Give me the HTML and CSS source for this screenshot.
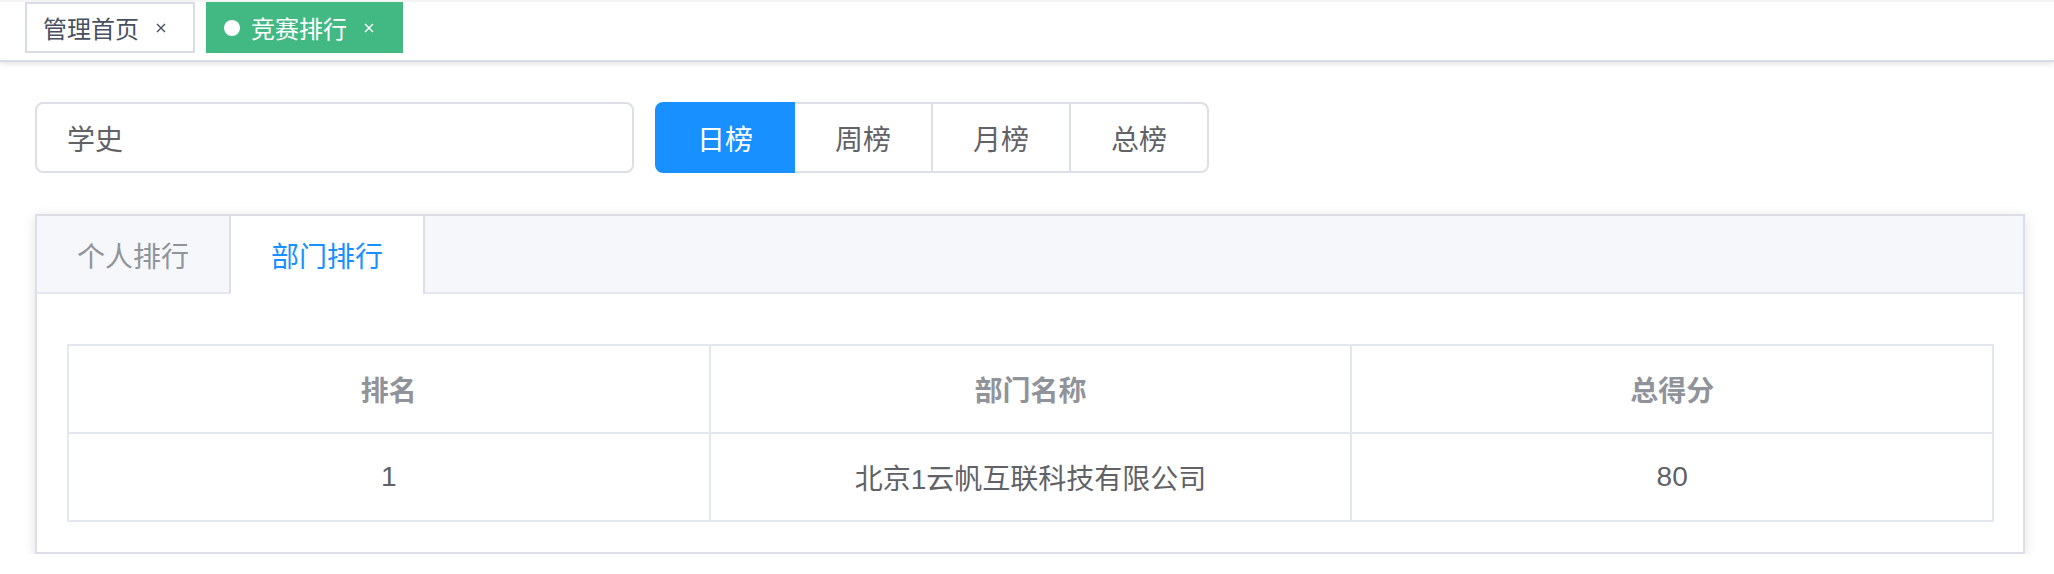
FILE: index.html
```html
<!DOCTYPE html>
<html lang="zh-CN">
<head>
  <meta charset="UTF-8">
  <meta name="viewport" content="width=device-width, initial-scale=1.0">
  <title>竞赛排行</title>
  <link rel="stylesheet" href="styles.css">
</head>
<body>
  <div class="tags-view">
    <span class="tag">
      管理首页
      <span class="tag-close"><svg width="10" height="10" viewBox="0 0 10 10"><path d="M1 1L9 9M9 1L1 9" stroke="currentColor" stroke-width="1.4" fill="none"/></svg></span>
    </span>
    <span class="tag active">
      <i class="dot"></i>竞赛排行
      <span class="tag-close"><svg width="10" height="10" viewBox="0 0 10 10"><path d="M1 1L9 9M9 1L1 9" stroke="currentColor" stroke-width="1.4" fill="none"/></svg></span>
    </span>
  </div>

  <div class="app-container">
    <div class="filter">
      <input class="search-input" type="text" value="学史">
      <div class="btn-group">
        <button class="btn active">日榜</button>
        <button class="btn">周榜</button>
        <button class="btn">月榜</button>
        <button class="btn">总榜</button>
      </div>
    </div>

    <div class="tabs-card">
      <div class="tabs-header">
        <div class="tab">个人排行</div>
        <div class="tab active">部门排行</div>
      </div>
      <div class="tabs-body">
        <table class="rank-table">
          <thead>
            <tr><th>排名</th><th>部门名称</th><th>总得分</th></tr>
          </thead>
          <tbody>
            <tr><td>1</td><td>北京1云帆互联科技有限公司</td><td>80</td></tr>
          </tbody>
        </table>
      </div>
    </div>
  </div>
</body>
</html>
```

FILE: styles.css
```css
/* Reset and base */
* { box-sizing: border-box; margin: 0; padding: 0; }
body {
  font-family: "Liberation Sans", "Noto Sans CJK SC", sans-serif;
  background: #fff;
  color: #606266;
}

/* Tags bar */
.tags-view {
  height: 62px;
  display: flex;
  align-items: flex-start;
  gap: 11px;
  padding-left: 25px;
  border-top: 2px solid #f4f4f5;
  border-bottom: 2px solid #d8dce5;
  box-shadow: 0 2px 6px rgba(0,0,0,0.10), 0 0 6px rgba(0,0,0,0.03);
}
.tag {
  display: flex;
  align-items: center;
  height: 51px;
  padding: 0 16px;
  border: 2px solid #d8dce5;
  background: #fff;
  color: #495060;
  font-size: 24px;
}
.tag.active { background: #42b983; border-color: #42b983; color: #fff; }
.dot {
  width: 16px;
  height: 16px;
  border-radius: 50%;
  background: #fff;
  margin-right: 11px;
}
.tag-close {
  width: 32px;
  height: 32px;
  margin-left: 6px;
  display: flex;
  align-items: center;
  justify-content: center;
}

/* Main */
.app-container { padding: 40px 29px 0 35px; }
.filter { display: flex; gap: 21px; }
.search-input {
  width: 599px;
  height: 71px;
  padding: 0 30px;
  border: 2px solid #dcdfe6;
  border-radius: 8px;
  font-family: inherit;
  font-size: 28px;
  color: #606266;
  outline: none;
}
.btn-group { display: flex; }
.btn {
  width: 140px;
  height: 71px;
  margin-left: -2px;
  border: 2px solid #dcdfe6;
  background: #fff;
  color: #606266;
  font-family: inherit;
  font-size: 28px;
}
.btn:first-child { margin-left: 0; border-radius: 8px 0 0 8px; }
.btn:last-child { border-radius: 0 8px 8px 0; }
.btn.active { background: #1890ff; border-color: #1890ff; color: #fff; z-index: 1; }

/* Tabs card */
.tabs-card {
  margin-top: 41px;
  border: 2px solid #dcdfe6;
  background: #fff;
  box-shadow: 0 3px 12px rgba(0,0,0,0.12);
}
.tabs-header {
  display: flex;
  height: 78px;
  background: #f5f7fa;
  border-bottom: 2px solid #e4e7ed;
}
.tab {
  display: flex;
  align-items: center;
  padding: 0 40px;
  margin-bottom: -2px;
  font-size: 28px;
  color: #909399;
}
.tab.active {
  background: #fff;
  color: #1890ff;
  border-left: 2px solid #dcdfe6;
  border-right: 2px solid #dcdfe6;
}
.tabs-body { padding: 50px 29px 30px 30px; }

/* Table */
.rank-table {
  width: 100%;
  border-collapse: collapse;
  table-layout: fixed;
  font-size: 28px;
}
.rank-table th, .rank-table td {
  height: 88px;
  border: 2px solid #e3e8f0;
  text-align: center;
  font-weight: normal;
}
.rank-table th { color: #909399; font-weight: 600; }
.rank-table td { color: #606266; }
```
